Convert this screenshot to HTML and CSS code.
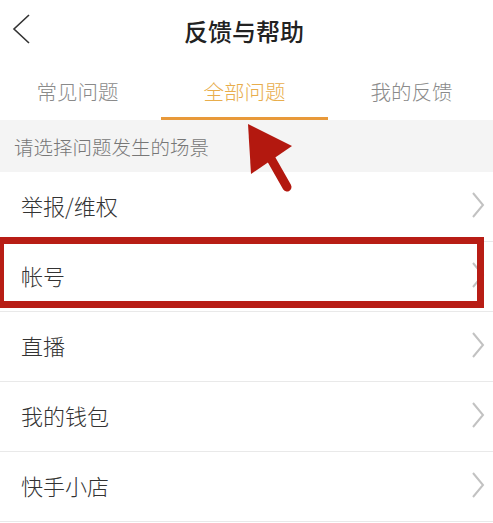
FILE: index.html
```html
<!DOCTYPE html>
<html>
<head>
	<title>反馈与帮助</title>
	<link rel="stylesheet" href="styles.css">
</head>
<body>
	<div class="page">
		<div class="header">
			<svg class="back" width="20" height="32" viewBox="0 0 20 32">
				<polyline points="17,2 2,16 17,30" fill="none" stroke="#333" stroke-width="1.6"/>
			</svg>
			<div class="title">反馈与帮助</div>
		</div>
		<div class="tabs">
			<div class="tab">常见问题</div>
			<div class="tab active">全部问题</div>
			<div class="tab">我的反馈</div>
		</div>
		<div class="hint">请选择问题发生的场景</div>
		<div class="list">
			<div class="item"><span>举报/维权</span><svg class="arrow" width="14" height="26" viewBox="0 0 14 26"><polyline points="2,1 12,13 2,25" fill="none" stroke="#c2c2c2" stroke-width="2"/></svg></div>
			<div class="item"><span>帐号</span><svg class="arrow" width="14" height="26" viewBox="0 0 14 26"><polyline points="2,1 12,13 2,25" fill="none" stroke="#c2c2c2" stroke-width="2"/></svg></div>
			<div class="item"><span>直播</span><svg class="arrow" width="14" height="26" viewBox="0 0 14 26"><polyline points="2,1 12,13 2,25" fill="none" stroke="#c2c2c2" stroke-width="2"/></svg></div>
			<div class="item"><span>我的钱包</span><svg class="arrow" width="14" height="26" viewBox="0 0 14 26"><polyline points="2,1 12,13 2,25" fill="none" stroke="#c2c2c2" stroke-width="2"/></svg></div>
			<div class="item"><span>快手小店</span><svg class="arrow" width="14" height="26" viewBox="0 0 14 26"><polyline points="2,1 12,13 2,25" fill="none" stroke="#c2c2c2" stroke-width="2"/></svg></div>
		</div>

		<!-- annotation overlay -->
		<div class="mark-box"></div>
		<svg class="mark-arrow" width="493" height="523" viewBox="0 0 493 523">
			<line x1="266" y1="150" x2="287" y2="187" stroke="#b3180f" stroke-width="9" stroke-linecap="round"/>
			<polygon points="248,124 292,146 251,174" fill="#b3180f"/>
		</svg>
	</div>
</body>
</html>
```

FILE: styles.css
```css
body {
	margin: 0;
	background: #fff;
	font-family: "Noto Sans CJK SC", "Noto Sans", sans-serif;
}

.page {
	position: relative;
	width: 493px;
	height: 523px;
	overflow: hidden;
}

.header {
	position: relative;
	height: 60px;
	display: flex;
	align-items: center;
	justify-content: center;
}

.back {
	position: absolute;
	left: 12px;
	top: 13px;
}

.title {
	font-size: 24px;
	font-weight: 500;
	color: #222;
	margin-left: -5px;
}

.tabs {
	display: flex;
	height: 60px;
	width: 501px;
	margin-left: -6px;
}

.tab {
	flex: 1;
	display: flex;
	align-items: center;
	justify-content: center;
	padding-top: 4px;
	box-sizing: border-box;
	font-size: 20.5px;
	font-weight: 300;
	color: #8a8a8a;
	border-bottom: 3px solid transparent;
}

.tab.active {
	color: #e8ad4c;
	border-bottom-color: #e8993a;
}

.hint {
	height: 52px;
	background: #f4f4f4;
	display: flex;
	align-items: center;
	padding-left: 14px;
	font-size: 19.5px;
	font-weight: 300;
	color: #777;
}

.item {
	height: 69px;
	border-bottom: 1px solid #e9e9e9;
	display: flex;
	align-items: center;
	justify-content: space-between;
	padding: 0 8px 3px 21px;
	box-sizing: border-box;
	height: 70px;
	font-size: 22px;
	font-weight: 300;
	color: #333;
}

.mark-box {
	position: absolute;
	left: -3px;
	top: 237px;
	width: 487px;
	height: 71px;
	box-sizing: border-box;
	border: 7px solid #b81d15;
}

.mark-arrow {
	position: absolute;
	left: 0;
	top: 0;
}
```
